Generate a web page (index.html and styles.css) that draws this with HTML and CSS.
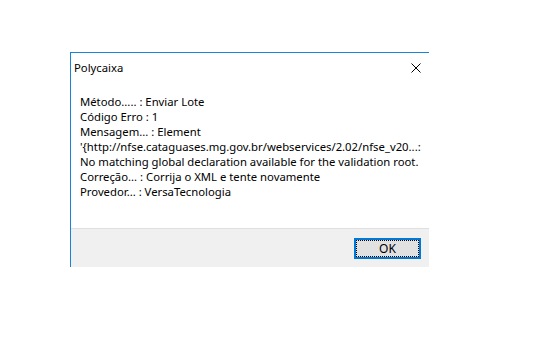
FILE: index.html
```html
<!DOCTYPE html>
<html>
<head>
<meta charset="utf-8">
<link rel="stylesheet" href="styles.css">
</head>
<body>
<div class="stage">
  <div class="dialog">
    <div class="titlebar">
      <span class="title">Polycaixa</span>
      <svg class="close" width="10" height="10" viewBox="0 0 10 10"><path d="M0.5 0.5 L9.5 9.5 M9.5 0.5 L0.5 9.5" stroke="#000" stroke-width="1" fill="none"/></svg>
    </div>
    <div class="content">
      <div class="line">Método..... : Enviar Lote</div>
      <div class="line">Código Erro : 1</div>
      <div class="line">Mensagem... : Element</div>
      <div class="line">'{http://nfse.cataguases.mg.gov.br/webservices/2.02/nfse_v20...:</div>
      <div class="line">No matching global declaration available for the validation root.</div>
      <div class="line">Correção... : Corrija o XML e tente novamente</div>
      <div class="line">Provedor... : VersaTecnologia</div>
    </div>
    <div class="footer">
      <button class="ok"><span class="focus">OK</span></button>
    </div>
  </div>
</div>
</body>
</html>
```
FILE: styles.css
```css
html, body {
  margin: 0;
  padding: 0;
  background: #fff;
}
.stage {
  padding: 52px 0 0 70px;
}
.dialog {
  width: 358px;
  border-top: 1px solid #1883d7;
  border-left: 1px solid #1883d7;
  font-family: "Noto Sans", sans-serif;
  font-size: 11.3px;
  color: #000;
  background: #fff;
}
.titlebar {
  height: 29px;
  display: flex;
  align-items: center;
  justify-content: space-between;
  padding: 0 8px 0 3px;
}
.title {
  line-height: 15px;
}
.close {
  display: block;
}
.content {
  padding: 12px 0 0 9px;
  height: 134px;
}
.line {
  line-height: 15px;
  white-space: nowrap;
}
.footer {
  height: 39px;
  border-top: 1px solid #dfdfdf;
  background: #f0f0f0;
  display: flex;
  justify-content: flex-end;
  align-items: flex-start;
  padding: 9px 8px 0 0;
  box-sizing: border-box;
}
.ok {
  width: 67px;
  height: 21px;
  border: 2px solid #0078d7;
  background: #e1e1e1;
  padding: 0;
  margin: 0;
  font-family: inherit;
  font-size: 12px;
  color: #000;
  display: flex;
}
.focus {
  flex: 1;
  border: 1px dotted #000;
  display: flex;
  align-items: center;
  justify-content: center;
  line-height: 13px;
}
```
